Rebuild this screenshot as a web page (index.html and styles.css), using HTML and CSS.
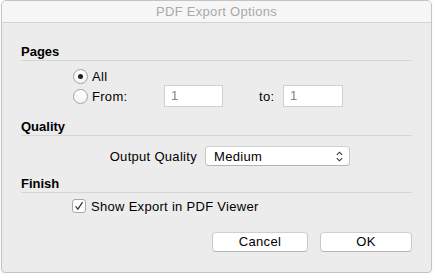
FILE: index.html
```html
<!DOCTYPE html>
<html lang="en">
<head>
    <meta charset="UTF-8">
    <title>PDF Export Options</title>
    <link rel="stylesheet" href="styles.css">
</head>
<body>
    <div class="window">
        <div class="titlebar">PDF Export Options</div>

        <div class="content">
            <!-- Pages -->
            <div class="section-title">Pages</div>
            <div class="radio-group">
                <div class="radio-row">
                    <span class="radio checked"></span>
                    <span class="radio-label">All</span>
                </div>
                <div class="radio-row">
                    <span class="radio"></span>
                    <span class="radio-label">From:</span>
                    <span class="field">1</span>
                    <span class="to-label">to:</span>
                    <span class="field field-to">1</span>
                </div>
            </div>

            <!-- Quality -->
            <div class="section-title">Quality</div>
            <div class="quality-row">
                <span class="quality-label">Output Quality</span>
                <div class="select">
                    <span>Medium</span>
                    <svg class="select-arrows" width="7" height="11" viewBox="0 0 7 11">
                        <path d="M0.8 3.8 L3.5 1.2 L6.2 3.8 M0.8 7.2 L3.5 9.8 L6.2 7.2" fill="none" stroke="#333" stroke-width="1.1"/>
                    </svg>
                </div>
            </div>

            <!-- Finish -->
            <div class="section-title">Finish</div>
            <div class="check-row">
                <span class="checkbox">
                    <svg width="10" height="10" viewBox="0 0 10 10">
                        <path d="M1.6 5.4 L3.9 8.2 L8.6 1.2" fill="none" stroke="#3a3a3a" stroke-width="1.3"/>
                    </svg>
                </span>
                <span>Show Export in PDF Viewer</span>
            </div>

            <div class="buttons">
                <div class="button cancel">Cancel</div>
                <div class="button ok">OK</div>
            </div>
        </div>
    </div>
</body>
</html>
```

FILE: styles.css
```css
html, body {
    margin: 0;
    padding: 0;
}
body {
    background: #fbfbfb;
    font-family: "Liberation Sans", Arial, sans-serif;
    font-size: 13px;
    letter-spacing: 0.3px;
    color: #000;
}
.window {
    box-sizing: border-box;
    width: 431px;
    height: 273px;
    margin-left: 1px;
    background: #ececec;
    border: 1px solid #c4c4c4;
    border-radius: 5px 5px 4px 4px;
    overflow: hidden;
}
.titlebar {
    height: 21px;
    line-height: 21px;
    background: #f6f6f6;
    border-bottom: 1px solid #d2d2d2;
    text-align: center;
    color: #a9a9a9;
}
.content {
    padding: 21px 19px 0 19px;
}
.section-title {
    font-weight: bold;
    letter-spacing: 0;
    line-height: 16px;
    border-bottom: 1px solid #d6d6d6;
}
.radio-group {
    margin: 5px 0 13px;
    padding-left: 52px;
}
.radio-row {
    display: flex;
    align-items: center;
    height: 20px;
}
.radio {
    box-sizing: border-box;
    width: 15px;
    height: 15px;
    border: 1px solid #a2a2a2;
    border-radius: 50%;
    background: linear-gradient(#ffffff, #f4f4f4);
    display: flex;
    align-items: center;
    justify-content: center;
}
.radio.checked::after {
    content: "";
    width: 5px;
    height: 5px;
    border-radius: 50%;
    background: #222;
}
.radio-label {
    margin-left: 4px;
    width: 72px;
}
.field {
    box-sizing: border-box;
    width: 59px;
    height: 22px;
    line-height: 20px;
    padding-left: 6px;
    background: #fff;
    border: 1px solid #d0d0d0;
    color: #7e8797;
}
.field-to {
    width: 60px;
    color: #8c7f7a;
}
.to-label {
    margin-left: 36px;
    width: 24px;
}
.quality-row {
    display: flex;
    align-items: center;
    height: 20px;
    margin: 10px 0 10px;
    padding-left: 87px;
    gap: 8px;
}
.quality-label {
    width: 89px;
    text-align: right;
}
.select {
    box-sizing: border-box;
    width: 145px;
    height: 20px;
    background: #fff;
    border: 1px solid #c6c6c6;
    border-top-color: #d0d0d0;
    border-bottom-color: #b4b4b4;
    border-radius: 4px;
    display: flex;
    align-items: center;
    justify-content: space-between;
    padding: 0 6px 0 8px;
}
.select-arrows {
    display: block;
}
.check-row {
    display: flex;
    align-items: center;
    height: 20px;
    margin-top: 3px;
    padding-left: 51px;
    gap: 5px;
}
.checkbox {
    box-sizing: border-box;
    width: 14px;
    height: 14px;
    background: #fff;
    border: 1px solid #a8a8a8;
    border-radius: 3px;
    display: flex;
    align-items: center;
    justify-content: center;
}
.checkbox svg {
    display: block;
}
.buttons {
    display: flex;
    justify-content: flex-end;
    gap: 12px;
    margin-top: 16px;
}
.button {
    box-sizing: border-box;
    height: 20px;
    line-height: 18px;
    text-align: center;
    background: #fff;
    border: 1px solid #c8c8c8;
    border-top-color: #d0d0d0;
    border-bottom-color: #b4b4b4;
    border-radius: 4px;
}
.cancel {
    width: 96px;
}
.ok {
    width: 92px;
}
```
